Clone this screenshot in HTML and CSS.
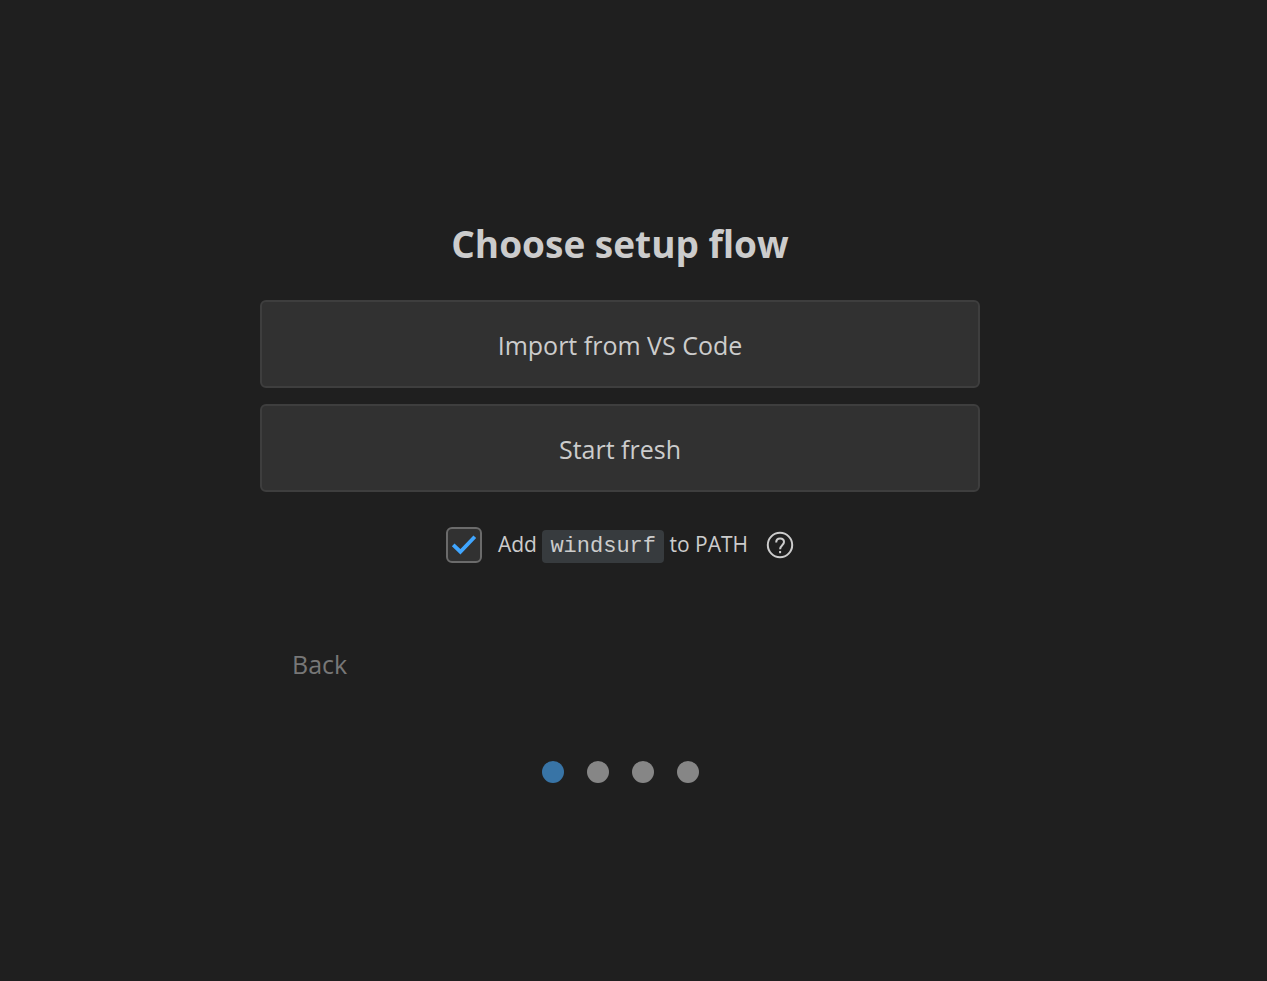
FILE: index.html
```html
<!DOCTYPE html>
<html lang="en">
<head>
<meta charset="utf-8">
<title>Choose setup flow</title>
<link rel="stylesheet" href="styles.css">
</head>
<body>
<main class="setup">
  <h1 class="title">Choose setup flow</h1>
  <div class="choices">
    <button class="choice" type="button">Import from VS Code</button>
    <button class="choice" type="button">Start fresh</button>
  </div>
  <div class="path-row">
    <span class="check">
      <input class="check-input" type="checkbox" id="add-path" checked>
      <svg class="check-mark" viewBox="0 0 36 36" aria-hidden="true"><path d="M7.200 17.800l7.200 6.900L28.800 9.800" fill="none" stroke="#40a6ff" stroke-width="3.8"/></svg>
    </span>
    <label class="path-label" for="add-path">Add <code class="command">windsurf</code> to PATH</label>
    <button class="help" type="button" aria-label="Help">
      <svg class="help-icon" viewBox="0 0 28 28" fill="none" stroke="currentColor" stroke-width="2"><circle cx="14" cy="14" r="12.2"/><path d="M10.200 11.400C10.200 9 11.800 7.500 14.100 7.500s3.900 1.400 3.900 3.600c0 3-3.900 3.500-3.900 7.100"/><path d="M14.100 20v2.200"/></svg>
    </button>
  </div>
  <div class="nav"><button class="back" type="button">Back</button></div>
  <div class="dots">
    <span class="dot dot-active"></span><span class="dot"></span><span class="dot"></span><span class="dot"></span>
  </div>
</main>
</body>
</html>
```
FILE: styles.css
```css
* { box-sizing: border-box; }
body {
  margin: 0;
  min-height: 100vh;
  padding-right: 27px;
  background: #1f1f1f;
  color: #cccccc;
  font-family: "Segoe UI", "Open Sans", "Noto Sans", sans-serif;
}
button { font: inherit; color: inherit; cursor: pointer; }
.setup {
  max-width: 720px;
  margin: 0 auto;
  padding-top: 220px;
}
.title {
  margin: 0 0 32px;
  font-size: 37px;
  line-height: 48px;
  font-weight: 700;
  text-align: center;
}
.choices { display: grid; gap: 16px; }
.choice {
  min-height: 88px;
  padding: 2px 16px 0;
  border: 2px solid #3e3e3e;
  border-radius: 6px;
  background: #313131;
  font-size: 25px;
}
.path-row {
  display: flex;
  justify-content: center;
  align-items: center;
  margin-top: 32px;
  min-height: 42px;
}
.check { display: grid; width: 36px; height: 36px; margin-right: 16px; }
.check-input {
  grid-area: 1 / 1;
  appearance: none;
  width: 36px;
  height: 36px;
  margin: 0;
  border: 2px solid #6b6b6b;
  border-radius: 6px;
  background: #313131;
}
.check-mark { grid-area: 1 / 1; width: 36px; height: 36px; pointer-events: none; visibility: hidden; }
.check-input:checked + .check-mark { visibility: visible; }
.path-label { font-size: 21px; line-height: 32px; }
.command {
  padding: 4px 8px;
  border-radius: 4px;
  background: #373b3e;
  font-family: "Courier New", "Liberation Mono", monospace;
  font-size: 22px;
}
.help { display: flex; margin-left: 18px; padding: 0; border: 0; background: none; }
.help-icon { width: 28px; height: 28px; }
.nav { margin-top: 78px; padding-left: 32px; }
.back { padding: 0; border: 0; background: none; color: #777777; font-size: 25px; line-height: 40px; }
.dots { display: flex; justify-content: center; gap: 23px; margin-top: 77px; }
.dot { width: 22px; height: 22px; border-radius: 50%; background: #868686; }
.dot-active { background: #3874a6; }
```
